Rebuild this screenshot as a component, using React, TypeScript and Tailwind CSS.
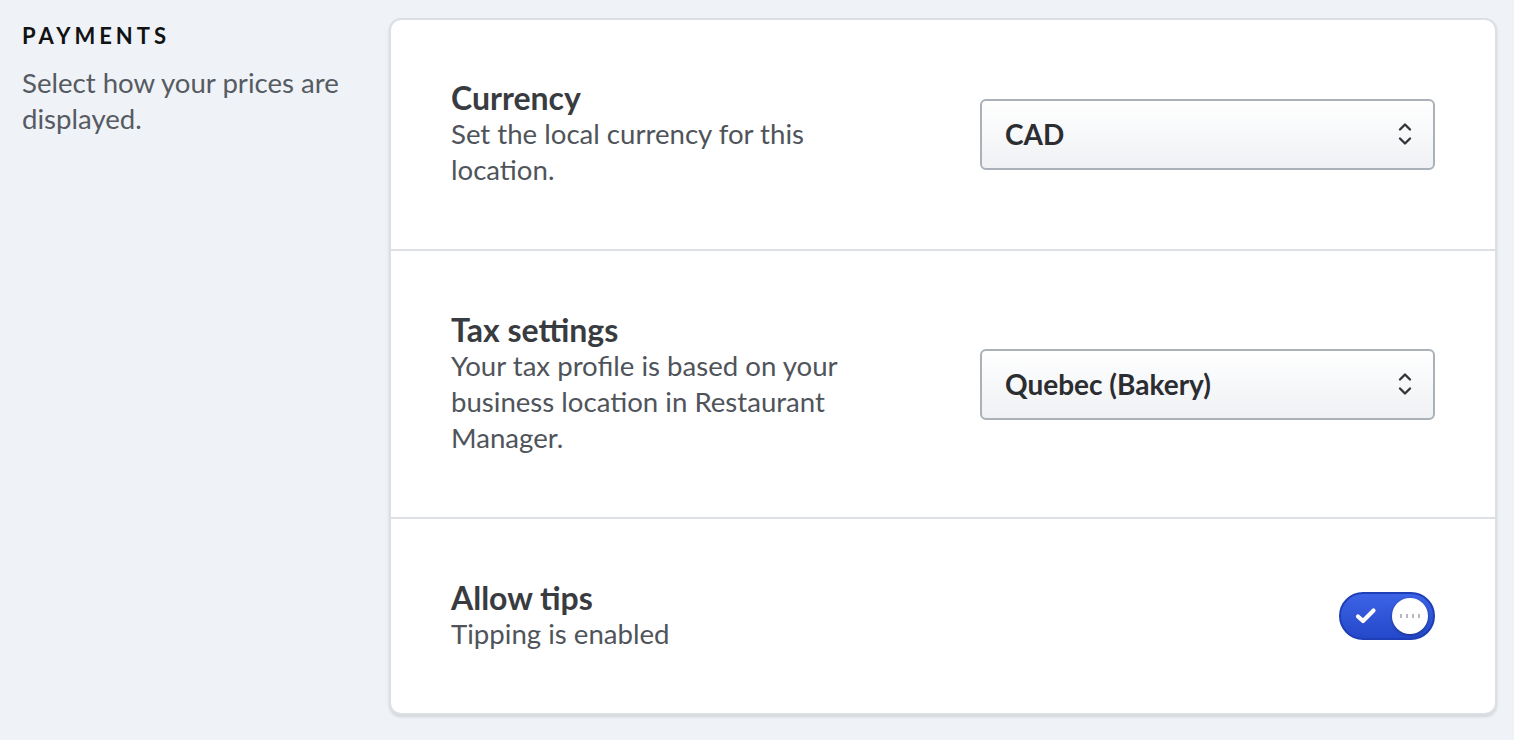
import { ReactNode } from "react"

const font = { fontFamily: "Lato, 'Open Sans', sans-serif" }

function Chevrons() {
  return (
    <svg width="14" height="26" viewBox="0 0 14 26" fill="none" className="text-[#33363b]">
      <path d="M2 8.5 L7 3.5 L12 8.5" stroke="currentColor" strokeWidth="2.4" strokeLinecap="round" strokeLinejoin="round" />
      <path d="M2 17.5 L7 22.5 L12 17.5" stroke="currentColor" strokeWidth="2.4" strokeLinecap="round" strokeLinejoin="round" />
    </svg>
  )
}

function Select({ value }: { value: string }) {
  return (
    <div className="w-[455px] h-[71px] flex items-center justify-between pl-[23px] pr-[21px] rounded-[6px] border-2 border-[#aab1b8] bg-gradient-to-b from-white to-[#eff1f4]">
      <span className="text-[28px] font-bold text-[#2b2d31]">{value}</span>
      <Chevrons />
    </div>
  )
}

function Toggle() {
  return (
    <div className="relative w-[96px] h-[48px] rounded-full border-2 border-[#1f3fb8] bg-gradient-to-b from-[#3d63e6] to-[#2448c9] flex items-center">
      <svg width="22" height="18" viewBox="0 0 22 18" className="ml-[14px]">
        <path d="M3 9.5 L8 14 L18.5 3.5" stroke="white" strokeWidth="4.2" fill="none" strokeLinecap="round" strokeLinejoin="round" />
      </svg>
      <div className="absolute right-[5px] top-1/2 -translate-y-1/2 w-[36px] h-[36px] rounded-full bg-white shadow-[0_1px_3px_rgba(0,0,0,0.35)] flex items-center justify-center gap-[4px]">
        <span className="w-[2px] h-[4px] bg-[#b5b9bf]" />
        <span className="w-[2px] h-[4px] bg-[#b5b9bf]" />
        <span className="w-[2px] h-[4px] bg-[#b5b9bf]" />
        <span className="w-[2px] h-[4px] bg-[#b5b9bf]" />
      </div>
    </div>
  )
}

function Row({ title, desc, control, first, last }: { title: string; desc: ReactNode; control: ReactNode; first?: boolean; last?: boolean }) {
  return (
    <div
      className={`flex items-center justify-between px-[60px] pb-[61px] ${first ? "pt-[60px]" : "pt-[61px]"} ${last ? "" : "border-b-2 border-[#dde0e4]"}`}
    >
      <div className="w-[420px]">
        <div className="text-[32px] leading-[36px] font-bold text-[#383b40]">{title}</div>
        <div className="text-[27.6px] leading-[36px] text-[#4f545b]">{desc}</div>
      </div>
      {control}
    </div>
  )
}

export default function App() {
  return (
    <div className="min-h-screen bg-[#eff2f7] flex pl-[22px] pr-[17px] pt-[18px]" style={font}>
      <div className="w-[345px] pt-[4px]">
        <div className="text-[22px] font-bold tracking-[4px] text-[#111214] leading-[28px]">PAYMENTS</div>
        <div className="mt-[15px] text-[27.6px] leading-[36px] text-[#565b62]">Select how your prices are displayed.</div>
      </div>
      <div className="ml-[22px] flex-1 h-fit bg-white rounded-[12px] border-2 border-[#dcdfe3] shadow-[0_2px_3px_rgba(0,0,0,0.12)] overflow-hidden">
        <Row
          title="Currency"
          desc="Set the local currency for this location."
          control={<Select value="CAD" />}
          first
        />
        <Row
          title="Tax settings"
          desc="Your tax profile is based on your business location in Restaurant Manager."
          control={<Select value="Quebec (Bakery)" />}
        />
        <Row title="Allow tips" desc="Tipping is enabled" control={<Toggle />} last />
      </div>
    </div>
  )
}
